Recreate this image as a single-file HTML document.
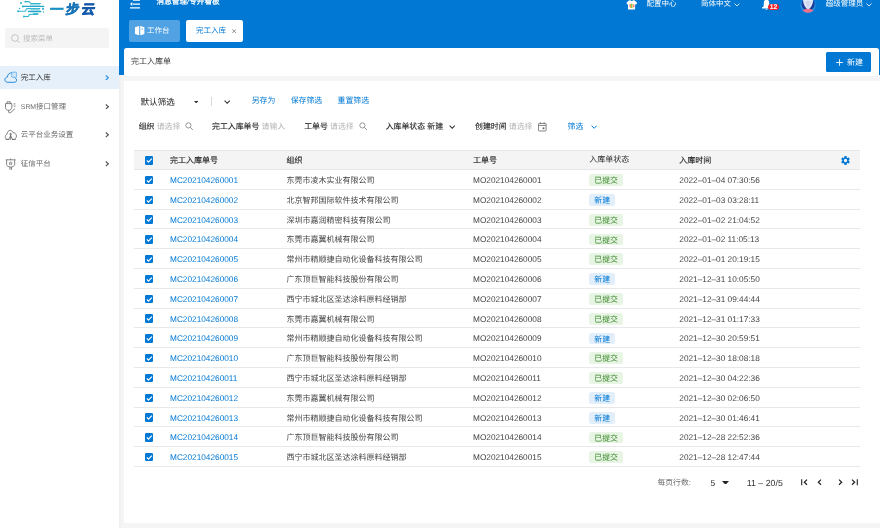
<!DOCTYPE html>
<html lang="zh-CN">
<head>
<meta charset="utf-8">
<title>完工入库单</title>
<style>
*{box-sizing:border-box;margin:0;padding:0}
html,body{width:880px;height:528px;overflow:hidden}
body{position:relative;background:#f5f5f5;font-family:"Liberation Sans",sans-serif;font-size:8px;color:#333;line-height:1;text-rendering:geometricPrecision;-webkit-font-smoothing:antialiased}
#app{position:absolute;left:0;top:0;width:880px;height:528px;overflow:hidden;will-change:transform}
.abs{position:absolute;white-space:nowrap}
/* sidebar */
.side{position:absolute;left:0;top:0;width:119px;height:528px;background:#fff;box-shadow:1px 0 2px rgba(0,0,0,.04)}
.logo-t{position:absolute;left:50px;top:1.7px;font-size:13.4px;font-weight:900;transform:skewX(-9deg);letter-spacing:2.4px;line-height:16px;white-space:nowrap;-webkit-text-stroke-width:.55px}
.srch{position:absolute;left:5px;top:28.3px;width:103.9px;height:20.1px;background:#f4f4f4;border-radius:2.5px}
.srch span{position:absolute;left:18px;top:5.3px;font-size:7.5px;color:#bdbdbd;line-height:9px}
.mi{position:absolute;left:0;width:119px;height:23px;font-size:7.5px;color:#6a6a6a}
.mi.on{background:#e5f0fa;color:#333}
.mi .tx{position:absolute;left:20.8px;top:6.7px;line-height:9px}
.mi .ic{position:absolute;left:4px;top:5.5px;width:13px;height:13px}
.mi .ar{position:absolute;left:104.9px;top:8.8px;width:4.2px;height:5.6px}
/* header */
.hdr{position:absolute;left:119px;top:0;width:761px;height:75.4px;background:#0078d4}
.hdr .t{position:absolute;color:#fff;font-size:7.5px;line-height:9px;white-space:nowrap}
.tab1{position:absolute;left:9.9px;top:20px;width:51.3px;height:22.4px;background:#50a2e2;border-radius:2px}
.tab2{position:absolute;left:67px;top:20px;width:57.2px;height:22.4px;background:#fff;border-radius:2px}
.title{position:absolute;left:124px;top:48px;width:755px;height:28px;background:#fff;border-radius:2.5px 2.5px 0 0}
.title .tt{position:absolute;left:7.1px;top:9.4px;font-size:8px;line-height:10px;color:#383838}
.btn{position:absolute;left:702px;top:4px;width:45px;height:20px;background:#0078d4;border-radius:1.5px;color:#fff}
/* card */
.card{position:absolute;left:124px;top:81px;width:756px;height:441.5px;background:#fff}
.lnk{color:#0078d4}
.ph{color:#b5b5b5}
/* table */
.tb{position:absolute;left:133.5px;top:150px;width:726.5px}
.th{position:relative;height:20px;background:#f4f4f4;border-top:1px solid #e6e6e6;border-bottom:1px solid #e6e6e6;color:#222;-webkit-text-stroke:.12px #222}
.tr{position:relative;height:19.8px;border-bottom:1px solid #e8e8e8;color:#444}
.th span,.tr span{position:absolute;white-space:nowrap;line-height:10px}
.tr span{top:6.1px}
.th span{top:4.9px}
.cb{left:11.2px;top:5.8px !important;width:8.5px;height:8.5px;background:#0078d4;border-radius:1.2px;line-height:0 !important}
.th .cb{top:5.4px !important}
.cb svg{display:block}
.c1{left:36.5px;font-size:8.28px}
.tr .c1{color:#0078d4}
.c2{left:153px}
.c3{left:339.5px;font-size:8.28px}
.c4{left:455.7px}
.th .c4{-webkit-text-stroke:0;top:4px;color:#2a2a2a}
.c5{left:545.8px;font-size:8.28px}
.bd{position:static !important;display:inline-block;height:11.8px;line-height:13.8px !important;padding:0 5.1px;border-radius:2.5px;font-size:7.9px;vertical-align:top;margin-top:-1.8px}
.bd.s{background:#e8f4e4;color:#3b8a2c}
.bd.n{background:#e2effb;color:#0078d4}
.pg{position:absolute;top:478px;font-size:8.5px;line-height:10px;color:#333;white-space:nowrap}
</style>
</head>
<body>
<div id="app">

<!-- ===== Sidebar ===== -->
<div class="side">
  <svg class="abs" style="left:0;top:0" width="50" height="20" viewBox="0 0 50 20">
    <rect x="30.3" y="4" width="9.6" height="1.7" fill="#aadfea"/>
    <rect x="30.7" y="9" width="9.2" height="1.6" fill="#aadfea"/>
    <g fill="none" stroke="#2fb3cf" stroke-linecap="round" stroke-linejoin="round">
      <path d="M25.3 1.6H29.1L30.7 3.5H40.4" stroke-width="1.1"/>
      <path d="M22.6 6.4H43.6" stroke-width="1.4" stroke="#25a6c9"/>
      <path d="M39.8 8.6H26.6L25.4 11.3H18.2" stroke-width="1.1" stroke="#3ab8d2"/>
      <path d="M28.5 11.5H40.8" stroke-width="1.4" stroke="#25a6c9"/>
      <path d="M24 16.5H28.3L29.4 14.5L37.8 14" stroke-width="1.1"/>
      <path d="M33.5 14H37.6" stroke-width="1.5" stroke="#2aabcd"/>
    </g>
    <g fill="#2fb3cf">
      <circle cx="25.3" cy="1.6" r=".9"/><rect x="20" y="2" width="2" height="2" rx=".4" fill="#3fbcd4"/>
      <circle cx="22.8" cy="6.4" r="1"/><circle cx="19.6" cy="8.4" r=".75"/><circle cx="18.1" cy="11.3" r="1.05"/>
      <circle cx="24" cy="16.5" r="1"/><rect x="42" y="7.8" width="2" height="2" rx=".4" fill="#3aaed0"/><rect x="43" y="11.2" width="1" height="1.6" rx=".3" fill="#3aaed0"/>
    </g>
  </svg>
  <div class="logo-t"><span style="color:#1b8fc3">一</span><span style="color:#1873b6">步</span><span style="color:#1459a9">云</span></div>

  <div class="srch">
    <svg class="abs" style="left:5.6px;top:5.3px" width="9.2" height="9.2" viewBox="0 0 9.2 9.2"><circle cx="4" cy="4" r="3.4" fill="none" stroke="#b5b5b5" stroke-width=".75"/><path d="M6.5 6.6L8.5 8.7" stroke="#b5b5b5" stroke-width=".8"/></svg>
    <span>搜索菜单</span>
  </div>

  <div class="mi on" style="top:66px">
    <svg class="ic" style="top:4.8px;left:4.4px" viewBox="0 0 13 13"><path d="M3.7 11.3C1.9 11.3 .9 10.1 .9 8.7 .9 7.3 1.9 6.3 3.2 6.2 3.5 3.6 5.4 1.7 8 1.7" fill="none" stroke="#1a84d8" stroke-width=".95"/><path d="M3.7 11.3H10.4C11.8 11.3 12.6 10.3 12.6 9.2 12.6 8.1 12 7.3 11.2 7" fill="none" stroke="#1a84d8" stroke-width=".95"/><rect x="7.7" y="1.2" width="5" height="5.2" rx="1" fill="#cfe6fa" stroke="#58a8ea" stroke-width=".8"/></svg>
    <span class="tx">完工入库</span>
    <svg class="ar" viewBox="0 0 4.2 5.6"><path d="M.8 .5L3.4 2.8.8 5.1" fill="none" stroke="#3a94df" stroke-width="1.25"/></svg>
  </div>
  <div class="mi" style="top:95px">
    <svg class="ic" viewBox="0 0 13 13"><g fill="none" stroke="#666" stroke-width=".8"><path d="M1.5 2.6H7.8V6.6C7.8 8.2 6.4 9.3 4.65 9.3 2.9 9.3 1.5 8.2 1.5 6.6Z"/><path d="M3 2.6V.8H6.3V2.6"/><path d="M4.65 9.3V11.4C5.4 12.3 6.6 11.8 8 10.4L11 7.6"/><path d="M9.6 2.9H11.5M9.6 5.1H11.5"/></g></svg>
    <span class="tx"><span style="font-size:6.9px">SRM</span>接口管理</span>
    <svg class="ar" viewBox="0 0 4.2 5.6"><path d="M.8 .5L3.4 2.8.8 5.1" fill="none" stroke="#555" stroke-width="1.2"/></svg>
  </div>
  <div class="mi" style="top:123.7px">
    <svg class="ic" viewBox="0 0 13 13"><g fill="none" stroke="#666" stroke-width=".8" stroke-linecap="round"><path d="M2.3 10.1C1.4 9.6 1.1 8.6 1.2 7.8 1.4 6.4 2.2 5.6 3 5.3 3.2 2.9 4.4 1.4 6.2 1.4 7.6 1.4 8.5 2.2 9 3.6 10.9 3.6 12.4 5 12.4 7 12.4 8.4 11.8 9.6 10.9 10.1"/><path d="M6.6 4.1V10.4M5.7 5.1H7.5M6.6 6.6L4.8 10.4M6.6 6.6L8.4 10.4"/><path d="M2.2 10.4H4.8M8.4 10.4H11.2" stroke-width="1"/></g></svg>
    <span class="tx">云平台业务设置</span>
    <svg class="ar" viewBox="0 0 4.2 5.6"><path d="M.8 .5L3.4 2.8.8 5.1" fill="none" stroke="#555" stroke-width="1.2"/></svg>
  </div>
  <div class="mi" style="top:152.3px">
    <svg class="ic" viewBox="0 0 13 13"><g fill="none" stroke="#666" stroke-width=".8"><path d="M1.8 1.8H11.5M6.6 .5V1.8"/><path d="M2.6 1.8V6.4C2.6 8 4.4 8.9 6.6 9.1 8.8 8.9 10.7 8 10.7 6.4V1.8"/><path d="M6.60 3.65L7.07 4.75L8.26 4.86L7.36 5.65L7.63 6.82L6.60 6.20L5.57 6.82L5.84 5.65L4.94 4.86L6.13 4.75Z" stroke-width=".6"/><path d="M5.9 9.1V11.8M7.5 9.1V11.8"/></g></svg>
    <span class="tx">征信平台</span>
    <svg class="ar" viewBox="0 0 4.2 5.6"><path d="M.8 .5L3.4 2.8.8 5.1" fill="none" stroke="#555" stroke-width="1.2"/></svg>
  </div>
</div>

<!-- ===== Header ===== -->
<div class="hdr">
  <svg class="abs" style="left:11px;top:-2px" width="10" height="12" viewBox="0 0 10 12"><path d="M2.9 2H10M2.9 6.05H10M0 9.9H10" stroke="#fff" stroke-width="1.35"/><path d="M0 6.05L2.3 4V8.1Z" fill="#fff"/></svg>
  <span class="t" style="left:37.6px;top:-3.3px;font-family:'Liberation Serif',serif;font-weight:normal;font-size:7.5px;letter-spacing:.1px;-webkit-text-stroke:.25px #fff">消息管理/专开看板</span>

  <div class="tab1">
    <svg class="abs" style="left:6.6px;top:6px" width="9.6" height="9.4" viewBox="0 0 9.6 9.4"><path d="M0 1.3L4.2 0V9.4L0 8.1Z" fill="#fff"/><path d="M5.2 0L9.4 1.3V8.1L5.2 9.4Z" fill="#fff"/><rect x="6.6" y="2.4" width="1.3" height="1.1" fill="#50a2e2"/></svg>
    <span class="t" style="left:18.2px;top:6.1px">工作台</span>
  </div>
  <div class="tab2">
    <span class="t" style="left:10px;top:6.4px;color:#0078d4">完工入库</span>
    <svg class="abs" style="left:45.6px;top:9.1px" width="4.4" height="4.4" viewBox="0 0 4.4 4.4"><path d="M.4 .4L4 4M4 .4L.4 4" stroke="#8a8a8a" stroke-width=".95"/></svg>
  </div>

  <!-- right tools -->
  <svg class="abs" style="left:507px;top:-3px" width="12" height="13" viewBox="626 -3 12 13"><path d="M626.4 2.7L629.2 .2H630.4C630.7 1.3 632.8 1.3 633.1 .2H634.3L637.1 2.7 636 4.7 635.1 4.2V9.5H628V4.2L627.2 4.7Z" fill="#fff"/><rect x="629.1" y="4.4" width="1" height="2.8" fill="#f5a3a3"/><rect x="630.1" y="3.7" width="1.1" height="4.3" fill="#f2a03a"/><rect x="631.2" y="3.7" width="1.1" height="4.3" fill="#5cba60"/><rect x="632.3" y="4" width="1" height="3.6" fill="#f2c94c"/><rect x="633.3" y="4.4" width="1.1" height="2.8" fill="#ee5f5f"/></svg>
  <span class="t" style="left:527.4px;top:-.6px">配置中心</span>
  <span class="t" style="left:582px;top:-.6px">简体中文</span>
  <svg class="abs" style="left:615px;top:2.5px" width="6" height="4" viewBox="0 0 6 4"><path d="M.5 .5L3 3 5.5 .5" fill="none" stroke="#fff" stroke-width=".8"/></svg>
  <svg class="abs" style="left:643px;top:-2px" width="9" height="13" viewBox="0 0 9 13"><path d="M.9 9.4C1.7 8.4 1.8 7.2 1.8 5.2 1.8 3 2.9 1.4 4.5 1.4 6.1 1.4 7.2 3 7.2 5.2 7.2 7.2 7.3 8.4 8.1 9.4Z" fill="#fff"/><path d="M.1 9H8.5V10.5H.1Z" fill="#fff"/><rect x="3.7" y="10.9" width="1.6" height=".8" fill="#fff"/></svg>
  <div class="abs" style="left:649.3px;top:3.5px;width:10.5px;height:6.8px;border-radius:3.4px;background:#ee2228;color:#fff;font-size:6.8px;font-weight:bold;line-height:7.2px;text-align:center">12</div>
  <svg class="abs" style="left:681px;top:-2px" width="16" height="16" viewBox="0 0 16 16"><defs><clipPath id="av"><circle cx="8" cy="7.5" r="7.3"/></clipPath></defs><circle cx="8" cy="7.5" r="7.6" fill="#2f8fe0"/><g clip-path="url(#av)"><circle cx="8.1" cy="6" r="6.6" fill="#183f98"/><path d="M2.9 0C2.9 6 5 10 8.1 11.7 11.2 10 13.3 6 13.3 0Z" fill="#e3e8f7"/><path d="M5.6 3C5.8 6.4 6.6 8.6 8.1 9.8 9.6 8.6 10.4 6.4 10.6 3Z" fill="#cfd7f0"/><ellipse cx="8" cy="12.9" rx="5.5" ry="2.1" fill="#f0708a"/></g></svg>
  <span class="t" style="left:706.8px;top:-.6px">超级管理员</span>
  <svg class="abs" style="left:747.4px;top:2.5px" width="6" height="4" viewBox="0 0 6 4"><path d="M.5 .5L3 3 5.5 .5" fill="none" stroke="#fff" stroke-width=".8"/></svg>
</div>

<!-- title bar -->
<div class="title">
  <span class="tt">完工入库单</span>
  <div class="btn">
    <svg class="abs" style="left:10px;top:6.6px" width="7" height="7" viewBox="0 0 7 7"><path d="M3.5 .2V6.8M.2 3.5H6.8" stroke="#fff" stroke-width=".9"/></svg>
    <span class="abs" style="left:21px;top:5.9px;font-size:8px;line-height:10px">新建</span>
  </div>
</div>

<!-- ===== Card ===== -->
<div class="card"></div>

<!-- filter row 1 -->
<span class="abs" style="left:140.5px;top:96.5px;font-size:8.6px;line-height:10px;color:#222">默认筛选</span>
<svg class="abs" style="left:193.7px;top:100.5px" width="4.4" height="2.4" viewBox="0 0 4.4 2.4"><path d="M0 0H4.4L2.2 2.4Z" fill="#333"/></svg>
<div class="abs" style="left:211.2px;top:96.8px;width:.7px;height:9px;background:#d9d9d9"></div>
<svg class="abs" style="left:223.5px;top:99.8px" width="6.4" height="4.2" viewBox="0 0 6.4 4.2"><path d="M.6 .6L3.2 3.3 5.8 .6" fill="none" stroke="#333" stroke-width="1.05"/></svg>
<span class="abs lnk" style="left:251.7px;top:96.2px;font-size:7.9px;line-height:9px">另存为</span>
<span class="abs lnk" style="left:290.7px;top:96.2px;font-size:7.9px;line-height:9px">保存筛选</span>
<span class="abs lnk" style="left:337.5px;top:96.2px;font-size:7.9px;line-height:9px">重置筛选</span>

<!-- filter row 2 -->
<span class="abs" style="left:138.7px;top:122px;font-size:7.9px;line-height:9px;color:#222;-webkit-text-stroke-width:.1px">组织 <span class="ph" style="-webkit-text-stroke-width:0">请选择</span></span>
<svg class="abs" style="left:185px;top:122.3px" width="8.5" height="8.5" viewBox="0 0 8.5 8.5"><circle cx="3.4" cy="3.4" r="2.6" fill="none" stroke="#8c8c8c" stroke-width=".9"/><path d="M5.3 5.3L7.8 7.8" stroke="#8c8c8c" stroke-width="1"/></svg>
<span class="abs" style="left:212px;top:122px;font-size:7.9px;line-height:9px;color:#222;-webkit-text-stroke-width:.1px">完工入库单号 <span class="ph" style="-webkit-text-stroke-width:0">请输入</span></span>
<span class="abs" style="left:304.2px;top:122px;font-size:7.9px;line-height:9px;color:#222;-webkit-text-stroke-width:.1px">工单号 <span class="ph" style="-webkit-text-stroke-width:0">请选择</span></span>
<svg class="abs" style="left:358.5px;top:122.3px" width="8.5" height="8.5" viewBox="0 0 8.5 8.5"><circle cx="3.4" cy="3.4" r="2.6" fill="none" stroke="#8c8c8c" stroke-width=".9"/><path d="M5.3 5.3L7.8 7.8" stroke="#8c8c8c" stroke-width="1"/></svg>
<span class="abs" style="left:385.7px;top:122px;font-size:7.9px;line-height:9px;color:#222;-webkit-text-stroke-width:.1px">入库单状态 <span style="color:#333">新建</span></span>
<svg class="abs" style="left:449.3px;top:124.8px" width="6.4" height="4.2" viewBox="0 0 6.4 4.2"><path d="M.6 .6L3.2 3.3 5.8 .6" fill="none" stroke="#333" stroke-width="1.05"/></svg>
<span class="abs" style="left:475px;top:122px;font-size:7.9px;line-height:9px;color:#222;-webkit-text-stroke-width:.1px">创建时间 <span class="ph" style="-webkit-text-stroke-width:0">请选择</span></span>
<svg class="abs" style="left:538px;top:122px" width="8.6" height="9.6" viewBox="0 0 8.6 9.6"><rect x=".5" y="1.4" width="7.6" height="7.6" rx=".8" fill="none" stroke="#666" stroke-width=".8"/><path d="M.5 3.4H8.1M2.4 .3V2M6.2 .3V2" stroke="#666" stroke-width=".8"/><rect x="4.6" y="5.4" width="1.8" height="1.8" fill="#666"/></svg>
<span class="abs lnk" style="left:567.5px;top:122px;font-size:7.9px;line-height:9px">筛选</span>
<svg class="abs" style="left:591px;top:124.8px" width="6.4" height="4.2" viewBox="0 0 6.4 4.2"><path d="M.6 .6L3.2 3.3 5.8 .6" fill="none" stroke="#0078d4" stroke-width="1"/></svg>

<!-- ===== Table ===== -->
<div class="tb">
  <div class="th"><span class="cb"><svg viewBox="0 0 9 9" width="8.5" height="8.5"><path d="M1.9 4.6 L3.7 6.4 L7.2 2.7" fill="none" stroke="#fff" stroke-width="1.25"/></svg></span><span class="c1" style="font-size:8px">完工入库单号</span><span class="c2">组织</span><span class="c3" style="font-size:8px">工单号</span><span class="c4">入库单状态</span><span class="c5" style="font-size:8px">入库时间</span>
    <svg class="abs" style="left:706.4px;top:3.9px" width="11" height="11" viewBox="0 0 24 24"><path fill="#0078d4" d="M19.14 12.94c.04-.3.06-.61.06-.94 0-.32-.02-.64-.07-.94l2.03-1.58a.49.49 0 0 0 .12-.61l-1.92-3.32a.49.49 0 0 0-.59-.22l-2.39.96c-.5-.38-1.03-.7-1.62-.94l-.36-2.54a.48.48 0 0 0-.48-.41h-3.84a.48.48 0 0 0-.47.41l-.36 2.54c-.59.24-1.13.57-1.62.94l-2.39-.96a.49.49 0 0 0-.59.22L2.74 8.87a.48.48 0 0 0 .12.61l2.03 1.58c-.05.3-.09.63-.09.94s.02.64.07.94l-2.03 1.58a.49.49 0 0 0-.12.61l1.92 3.32c.12.22.37.29.59.22l2.39-.96c.5.38 1.03.7 1.62.94l.36 2.54c.05.24.24.41.48.41h3.84c.24 0 .44-.17.47-.41l.36-2.54c.59-.24 1.13-.56 1.62-.94l2.39.96c.22.08.47 0 .59-.22l1.92-3.32a.49.49 0 0 0-.12-.61l-2.01-1.58zM12 15.6A3.6 3.6 0 1 1 12 8.4a3.6 3.6 0 0 1 0 7.2z"/></svg>
  </div>
<div class="tr"><span class="cb"><svg viewBox="0 0 9 9" width="8.5" height="8.5"><path d="M1.9 4.6 L3.7 6.4 L7.2 2.7" fill="none" stroke="#fff" stroke-width="1.25"/></svg></span><span class="c1">MC202104260001</span><span class="c2">东莞市凌木实业有限公司</span><span class="c3">MO202104260001</span><span class="c4"><span class="bd s">已提交</span></span><span class="c5">2022–01–04 07:30:56</span></div>
<div class="tr"><span class="cb"><svg viewBox="0 0 9 9" width="8.5" height="8.5"><path d="M1.9 4.6 L3.7 6.4 L7.2 2.7" fill="none" stroke="#fff" stroke-width="1.25"/></svg></span><span class="c1">MC202104260002</span><span class="c2">北京智邦国际软件技术有限公司</span><span class="c3">MO202104260002</span><span class="c4"><span class="bd n">新建</span></span><span class="c5">2022–01–03 03:28:11</span></div>
<div class="tr"><span class="cb"><svg viewBox="0 0 9 9" width="8.5" height="8.5"><path d="M1.9 4.6 L3.7 6.4 L7.2 2.7" fill="none" stroke="#fff" stroke-width="1.25"/></svg></span><span class="c1">MC202104260003</span><span class="c2">深圳市嘉润精密科技有限公司</span><span class="c3">MO202104260003</span><span class="c4"><span class="bd s">已提交</span></span><span class="c5">2022–01–02 21:04:52</span></div>
<div class="tr"><span class="cb"><svg viewBox="0 0 9 9" width="8.5" height="8.5"><path d="M1.9 4.6 L3.7 6.4 L7.2 2.7" fill="none" stroke="#fff" stroke-width="1.25"/></svg></span><span class="c1">MC202104260004</span><span class="c2">东莞市嘉翼机械有限公司</span><span class="c3">MO202104260004</span><span class="c4"><span class="bd s">已提交</span></span><span class="c5">2022–01–02 11:05:13</span></div>
<div class="tr"><span class="cb"><svg viewBox="0 0 9 9" width="8.5" height="8.5"><path d="M1.9 4.6 L3.7 6.4 L7.2 2.7" fill="none" stroke="#fff" stroke-width="1.25"/></svg></span><span class="c1">MC202104260005</span><span class="c2">常州市精顺捷自动化设备科技有限公司</span><span class="c3">MO202104260005</span><span class="c4"><span class="bd s">已提交</span></span><span class="c5">2022–01–01 20:19:15</span></div>
<div class="tr"><span class="cb"><svg viewBox="0 0 9 9" width="8.5" height="8.5"><path d="M1.9 4.6 L3.7 6.4 L7.2 2.7" fill="none" stroke="#fff" stroke-width="1.25"/></svg></span><span class="c1">MC202104260006</span><span class="c2">广东顶巨智能科技股份有限公司</span><span class="c3">MO202104260006</span><span class="c4"><span class="bd n">新建</span></span><span class="c5">2021–12–31 10:05:50</span></div>
<div class="tr"><span class="cb"><svg viewBox="0 0 9 9" width="8.5" height="8.5"><path d="M1.9 4.6 L3.7 6.4 L7.2 2.7" fill="none" stroke="#fff" stroke-width="1.25"/></svg></span><span class="c1">MC202104260007</span><span class="c2">西宁市城北区圣达涂料原料经销部</span><span class="c3">MO202104260007</span><span class="c4"><span class="bd s">已提交</span></span><span class="c5">2021–12–31 09:44:44</span></div>
<div class="tr"><span class="cb"><svg viewBox="0 0 9 9" width="8.5" height="8.5"><path d="M1.9 4.6 L3.7 6.4 L7.2 2.7" fill="none" stroke="#fff" stroke-width="1.25"/></svg></span><span class="c1">MC202104260008</span><span class="c2">东莞市嘉翼机械有限公司</span><span class="c3">MO202104260008</span><span class="c4"><span class="bd s">已提交</span></span><span class="c5">2021–12–31 01:17:33</span></div>
<div class="tr"><span class="cb"><svg viewBox="0 0 9 9" width="8.5" height="8.5"><path d="M1.9 4.6 L3.7 6.4 L7.2 2.7" fill="none" stroke="#fff" stroke-width="1.25"/></svg></span><span class="c1">MC202104260009</span><span class="c2">常州市精顺捷自动化设备科技有限公司</span><span class="c3">MO202104260009</span><span class="c4"><span class="bd n">新建</span></span><span class="c5">2021–12–30 20:59:51</span></div>
<div class="tr"><span class="cb"><svg viewBox="0 0 9 9" width="8.5" height="8.5"><path d="M1.9 4.6 L3.7 6.4 L7.2 2.7" fill="none" stroke="#fff" stroke-width="1.25"/></svg></span><span class="c1">MC202104260010</span><span class="c2">广东顶巨智能科技股份有限公司</span><span class="c3">MO202104260010</span><span class="c4"><span class="bd s">已提交</span></span><span class="c5">2021–12–30 18:08:18</span></div>
<div class="tr"><span class="cb"><svg viewBox="0 0 9 9" width="8.5" height="8.5"><path d="M1.9 4.6 L3.7 6.4 L7.2 2.7" fill="none" stroke="#fff" stroke-width="1.25"/></svg></span><span class="c1">MC202104260011</span><span class="c2">西宁市城北区圣达涂料原料经销部</span><span class="c3">MO202104260011</span><span class="c4"><span class="bd s">已提交</span></span><span class="c5">2021–12–30 04:22:36</span></div>
<div class="tr"><span class="cb"><svg viewBox="0 0 9 9" width="8.5" height="8.5"><path d="M1.9 4.6 L3.7 6.4 L7.2 2.7" fill="none" stroke="#fff" stroke-width="1.25"/></svg></span><span class="c1">MC202104260012</span><span class="c2">东莞市嘉翼机械有限公司</span><span class="c3">MO202104260012</span><span class="c4"><span class="bd n">新建</span></span><span class="c5">2021–12–30 02:06:50</span></div>
<div class="tr"><span class="cb"><svg viewBox="0 0 9 9" width="8.5" height="8.5"><path d="M1.9 4.6 L3.7 6.4 L7.2 2.7" fill="none" stroke="#fff" stroke-width="1.25"/></svg></span><span class="c1">MC202104260013</span><span class="c2">常州市精顺捷自动化设备科技有限公司</span><span class="c3">MO202104260013</span><span class="c4"><span class="bd n">新建</span></span><span class="c5">2021–12–30 01:46:41</span></div>
<div class="tr"><span class="cb"><svg viewBox="0 0 9 9" width="8.5" height="8.5"><path d="M1.9 4.6 L3.7 6.4 L7.2 2.7" fill="none" stroke="#fff" stroke-width="1.25"/></svg></span><span class="c1">MC202104260014</span><span class="c2">广东顶巨智能科技股份有限公司</span><span class="c3">MO202104260014</span><span class="c4"><span class="bd s">已提交</span></span><span class="c5">2021–12–28 22:52:36</span></div>
<div class="tr"><span class="cb"><svg viewBox="0 0 9 9" width="8.5" height="8.5"><path d="M1.9 4.6 L3.7 6.4 L7.2 2.7" fill="none" stroke="#fff" stroke-width="1.25"/></svg></span><span class="c1">MC202104260015</span><span class="c2">西宁市城北区圣达涂料原料经销部</span><span class="c3">MO202104260015</span><span class="c4"><span class="bd s">已提交</span></span><span class="c5">2021–12–28 12:47:44</span></div>
</div>

<!-- pagination -->
<span class="pg" style="left:657.5px;color:#6b6b6b;font-size:7.8px">每页行数:</span>
<span class="pg" style="left:710.5px">5</span>
<svg class="abs" style="left:722px;top:480.7px" width="7" height="3.8" viewBox="0 0 7 3.8"><path d="M0 0H7L3.5 3.8Z" fill="#222"/></svg>
<span class="pg" style="left:746.8px;font-size:8.8px">11 – 20/5</span>
<svg class="abs" style="left:800.6px;top:479.3px" width="7" height="6.4" viewBox="0 0 7 6.4"><path d="M.7 .2V6.2" stroke="#222" stroke-width="1.1"/><path d="M6 .6L3.3 3.2 6 5.8" fill="none" stroke="#222" stroke-width="1.2"/></svg>
<svg class="abs" style="left:816.6px;top:479.3px" width="5" height="6.4" viewBox="0 0 5 6.4"><path d="M4 .6L1.3 3.2 4 5.8" fill="none" stroke="#222" stroke-width="1.2"/></svg>
<svg class="abs" style="left:837.6px;top:479.3px" width="5" height="6.4" viewBox="0 0 5 6.4"><path d="M1 .6L3.7 3.2 1 5.8" fill="none" stroke="#222" stroke-width="1.2"/></svg>
<svg class="abs" style="left:851.2px;top:479.3px" width="7" height="6.4" viewBox="0 0 7 6.4"><path d="M6.3 .2V6.2" stroke="#222" stroke-width="1.1"/><path d="M1 .6L3.7 3.2 1 5.8" fill="none" stroke="#222" stroke-width="1.2"/></svg>

</div>
</body>
</html>
